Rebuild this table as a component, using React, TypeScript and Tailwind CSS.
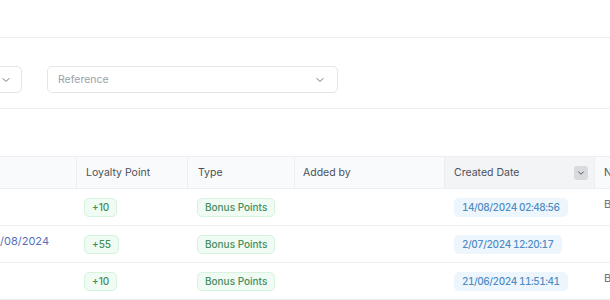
import React from "react";

const Chevron = ({ className = "" }: { className?: string }) => (
  <svg viewBox="0 0 24 24" className={className} fill="none" stroke="currentColor" strokeWidth={2} strokeLinecap="round" strokeLinejoin="round">
    <path d="M6 9l6 6 6-6" />
  </svg>
);

const Green = ({ children }: { children: React.ReactNode }) => (
  <span className="inline-flex items-center h-[19px] px-[7px] rounded-[5px] border border-[#d6f3df] bg-[#f0fbf3] text-[#468d60] text-[10px] font-medium">
    {children}
  </span>
);

const DateBadge = ({ children }: { children: React.ReactNode }) => (
  <span className="inline-flex items-center h-[19px] px-[8px] rounded-[5px] bg-[#eef6fd] text-[#4f8cc2] text-[10px] font-medium tabular-nums tracking-[-0.45px]">
    {children}
  </span>
);

const rows = [
  { c0: "", pts: "+10", date: "14/08/2024 02:48:56", last: "B" },
  { c0: "14/08/2024", pts: "+55", date: "2/07/2024 12:20:17", last: "" },
  { c0: "", pts: "+10", date: "21/06/2024 11:51:41", last: "B" },
];

export default function App() {
  return (
    <div className="w-[610px] h-[300px] overflow-hidden bg-white" style={{ fontFamily: "Inter, 'Noto Sans', sans-serif" }}>
      <div className="h-[38px] border-b border-[#eceef1]" />
      <div className="pt-[28px] pb-[15px] border-b border-[#eceef1] flex gap-[25px] -ml-[128px]">
        <div className="w-[150px] h-[27px] rounded-[5px] border border-[#e3e5e9] flex items-center justify-end pr-[9px] text-[#6b7280]">
          <Chevron className="w-[12px] h-[12px]" />
        </div>
        <div className="w-[291px] h-[27px] rounded-[5px] border border-[#e3e5e9] flex items-center justify-between pl-[10px] pr-[11px]">
          <span className="text-[10.5px] text-[#9ca0aa]">Reference</span>
          <Chevron className="w-[12px] h-[12px] text-[#6b7280]" />
        </div>
      </div>
      <div className="mt-[47px] -ml-[73px] w-[800px]">
        <div className="grid grid-cols-[150px_111px_107px_150px_150px_132px] h-[33px] border-y border-[#eceef1] bg-[#f9fafb] text-[10.5px] text-[#4b5058]">
          <div className="border-r border-[#eceef1]" />
          <div className="flex items-center pl-[9px] border-r border-[#eceef1]">Loyalty Point</div>
          <div className="flex items-center pl-[10px] border-r border-[#eceef1]">Type</div>
          <div className="flex items-center pl-[8px] border-r border-[#eceef1]">Added by</div>
          <div className="flex items-center justify-between pl-[9px] pr-[6px] bg-[#f3f4f6] border-r border-[#eceef1]">
            <span>Created Date</span>
            <span className="w-[14px] h-[14px] rounded-[3px] bg-[#d8dade] flex items-center justify-center text-[#374151]">
              <Chevron className="w-[10px] h-[10px]" />
            </span>
          </div>
          <div className="flex items-center pl-[9px]">Name</div>
        </div>
        {rows.map((r, i) => (
          <div key={i} className="grid grid-cols-[150px_111px_107px_150px_150px_132px] h-[37px] border-b border-[#eceef1] text-[11px]">
            <div className="flex items-center justify-end pr-[28px] pb-[6px] text-[#566fb6]">{r.c0}</div>
            <div className="flex items-center pl-[7px]"><Green>{r.pts}</Green></div>
            <div className="flex items-center pl-[9px]"><Green>Bonus Points</Green></div>
            <div />
            <div className="flex items-center pl-[9px]"><DateBadge>{r.date}</DateBadge></div>
            <div className="flex items-center pl-[9px] pb-[6px] text-[#6b7280]">{r.last}</div>
          </div>
        ))}
      </div>
    </div>
  );
}
